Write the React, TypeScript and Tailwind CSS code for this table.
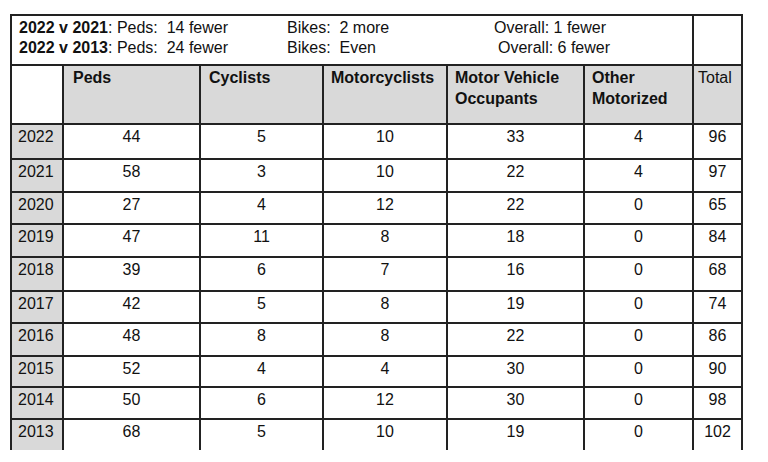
import React from 'react'

const rows = [
  { year: '2022', peds: 44, cyc: 5, moto: 10, mv: 33, other: 4, total: 96, h: 'h-[35px]' },
  { year: '2021', peds: 58, cyc: 3, moto: 10, mv: 22, other: 4, total: 97, h: 'h-[33px]' },
  { year: '2020', peds: 27, cyc: 4, moto: 12, mv: 22, other: 0, total: 65, h: 'h-[32px]' },
  { year: '2019', peds: 47, cyc: 11, moto: 8, mv: 18, other: 0, total: 84, h: 'h-[33px]' },
  { year: '2018', peds: 39, cyc: 6, moto: 7, mv: 16, other: 0, total: 68, h: 'h-[34px]' },
  { year: '2017', peds: 42, cyc: 5, moto: 8, mv: 19, other: 0, total: 74, h: 'h-[32px]' },
  { year: '2016', peds: 48, cyc: 8, moto: 8, mv: 22, other: 0, total: 86, h: 'h-[33px]' },
  { year: '2015', peds: 52, cyc: 4, moto: 4, mv: 30, other: 0, total: 90, h: 'h-[31px]' },
  { year: '2014', peds: 50, cyc: 6, moto: 12, mv: 30, other: 0, total: 98, h: 'h-[32px]' },
  { year: '2013', peds: 68, cyc: 5, moto: 10, mv: 19, other: 0, total: 102, h: 'h-[30px]' },
]

const cell = 'border-r-2 border-[#222] pt-[1px] leading-[21px]'

export default function App() {
  return (
    <div
      className="min-h-[462px] bg-white text-[16px] text-[#111]"
      style={{ fontFamily: '"Liberation Sans", Arial, sans-serif' }}
    >
      <div className="ml-[10px] pt-[14px]">
        <div className="w-[733px] border-l-2 border-t-2 border-[#222]">
          {/* comparison summary */}
          <div className="flex h-[50px] border-b-2 border-[#222]">
            <div className="w-[682px] border-r-2 border-[#222] pl-[7px] pt-[2px] leading-[20px]">
              <div className="flex whitespace-pre">
                <span className="w-[268px]">
                  <b>2022 v 2021</b>: Peds:  14 fewer
                </span>
                <span className="w-[207px]">Bikes:  2 more</span>
                <span>Overall: 1 fewer</span>
              </div>
              <div className="flex whitespace-pre">
                <span className="w-[268px]">
                  <b>2022 v 2013</b>: Peds:  24 fewer
                </span>
                <span className="w-[211px]">Bikes:  Even</span>
                <span>Overall: 6 fewer</span>
              </div>
            </div>
            <div className="w-[49px] border-r-2 border-[#222]" />
          </div>

          {/* column headings */}
          <div className="flex h-[59px] border-b-2 border-[#222] font-bold">
            <div className={`w-[52px] ${cell}`} />
            <div className={`w-[137px] bg-[#d9d9d9] pl-[9px] ${cell}`}>Peds</div>
            <div className={`w-[123px] bg-[#d9d9d9] pl-[8px] ${cell}`}>Cyclists</div>
            <div className={`w-[124px] bg-[#d9d9d9] pl-[7px] ${cell}`}>Motorcyclists</div>
            <div className={`w-[137px] bg-[#d9d9d9] pl-[7px] ${cell}`}>
              Motor Vehicle
              <br />
              Occupants
            </div>
            <div className={`w-[109px] bg-[#d9d9d9] pl-[7px] ${cell}`}>
              Other
              <br />
              Motorized
            </div>
            <div className={`w-[49px] bg-[#d9d9d9] pl-[4px] font-normal ${cell}`}>Total</div>
          </div>

          {rows.map((r, i) => (
            <div
              key={r.year}
              className={`flex ${r.h} ${i < rows.length - 1 ? 'border-b-2 border-[#222]' : ''}`}
            >
              <div className={`w-[52px] bg-[#d9d9d9] pl-[6px] ${cell}`}>{r.year}</div>
              <div className={`w-[137px] text-center ${cell}`}>{r.peds}</div>
              <div className={`w-[123px] text-center ${cell}`}>{r.cyc}</div>
              <div className={`w-[124px] text-center ${cell}`}>{r.moto}</div>
              <div className={`w-[137px] text-center ${cell}`}>{r.mv}</div>
              <div className={`w-[109px] text-center ${cell}`}>{r.other}</div>
              <div className={`w-[49px] text-center ${cell}`}>{r.total}</div>
            </div>
          ))}
        </div>
      </div>
    </div>
  )
}
